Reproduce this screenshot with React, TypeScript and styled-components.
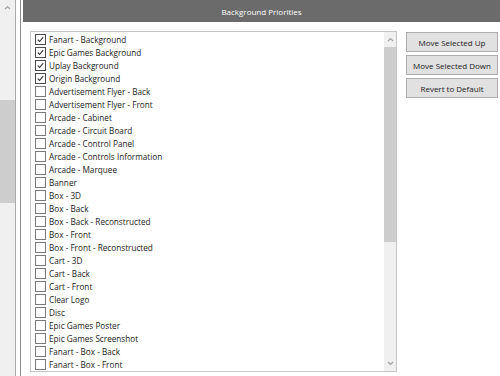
import React from 'react';
import styled, { createGlobalStyle, css } from 'styled-components';

const GlobalStyle = createGlobalStyle`
  html, body {
    margin: 0;
    padding: 0;
    background: #ffffff;
    overflow: hidden;
  }
  body {
    font-family: "Open Sans", "Noto Sans", sans-serif;
  }
`;

const Page = styled.div`
  display: flex;
  width: 500px;
  height: 376px;
  overflow: hidden;
  background: #ffffff;
`;

const ScrollTrack = styled.div<{ width: number }>`
  display: flex;
  flex-direction: column;
  width: ${({ width }) => width}px;
  flex: 0 0 ${({ width }) => width}px;
  background: #f0f0f0;
`;

const ScrollArrow = styled.div`
  display: flex;
  align-items: center;
  justify-content: center;
  height: 15px;
  flex: 0 0 15px;
  color: #a3a3a3;
`;

const ScrollSpace = styled.div<{ size: number }>`
  flex: 0 0 ${({ size }) => size}px;
`;

const ScrollThumb = styled.div<{ size: number }>`
  flex: 0 0 ${({ size }) => size}px;
  background: #cdcdcd;
`;

const ScrollRest = styled.div`
  flex: 1;
`;

const Gutter = styled.div`
  width: 4px;
  flex: 0 0 4px;
  border-left: 1px solid #a9a9a9;
  border-right: 1px solid #8c8c8c;
`;

const Panel = styled.div`
  display: flex;
  flex-direction: column;
  flex: 1;
  padding-left: 2px;
`;

const Header = styled.div`
  display: flex;
  align-items: center;
  justify-content: center;
  height: 22px;
  flex: 0 0 22px;
  background: #6b6b6b;
  color: #ffffff;
  font-size: 8px;
`;

const Body = styled.div`
  display: flex;
  align-items: flex-start;
  padding: 9px 0 0 7px;
`;

const ListBox = styled.div`
  display: flex;
  width: 367px;
  height: 341px;
  box-sizing: border-box;
  border: 1px solid #c6c6c6;
  overflow: hidden;
`;

const Items = styled.div`
  display: flex;
  flex-direction: column;
  flex: 1;
  padding: 1px 0 0 4px;
`;

const Row = styled.div`
  display: flex;
  align-items: center;
  height: 13px;
  flex: 0 0 13px;
  gap: 3px;
  font-size: 8.2px;
  color: #222222;
  white-space: nowrap;
`;

const Box = styled.div<{ checked: boolean }>`
  display: flex;
  align-items: center;
  justify-content: center;
  width: 11px;
  height: 11px;
  box-sizing: border-box;
  border: 1px solid #7a7a7a;
  background: #ffffff;
  ${({ checked }) => checked && css`
    border-color: #4a4a4a;
  `}
`;

const ButtonColumn = styled.div`
  display: flex;
  flex-direction: column;
  gap: 3px;
  margin: 1px 0 0 9px;
  width: 92px;
`;

const Button = styled.div`
  display: flex;
  align-items: center;
  justify-content: center;
  height: 20px;
  box-sizing: border-box;
  border: 1px solid #adadad;
  background: #e1e1e1;
  color: #1a1a1a;
  font-size: 8px;
  white-space: nowrap;
`;

const Chevron: React.FC<{ down?: boolean }> = ({ down }) => (
  <svg width="7" height="5" viewBox="0 0 7 5">
    <path d={down ? 'M1 1 L3.5 3.5 L6 1' : 'M1 4 L3.5 1.5 L6 4'} fill="none" stroke="currentColor" strokeWidth="1.2" />
  </svg>
);

const Check = () => (
  <svg width="9" height="9" viewBox="0 0 9 9">
    <path d="M1.8 4.6 L3.6 6.5 L7.2 2.2" fill="none" stroke="#333" strokeWidth="1.1" />
  </svg>
);

const items: [string, boolean][] = [
  ['Fanart - Background', true],
  ['Epic Games Background', true],
  ['Uplay Background', true],
  ['Origin Background', true],
  ['Advertisement Flyer - Back', false],
  ['Advertisement Flyer - Front', false],
  ['Arcade - Cabinet', false],
  ['Arcade - Circuit Board', false],
  ['Arcade - Control Panel', false],
  ['Arcade - Controls Information', false],
  ['Arcade - Marquee', false],
  ['Banner', false],
  ['Box - 3D', false],
  ['Box - Back', false],
  ['Box - Back - Reconstructed', false],
  ['Box - Front', false],
  ['Box - Front - Reconstructed', false],
  ['Cart - 3D', false],
  ['Cart - Back', false],
  ['Cart - Front', false],
  ['Clear Logo', false],
  ['Disc', false],
  ['Epic Games Poster', false],
  ['Epic Games Screenshot', false],
  ['Fanart - Box - Back', false],
  ['Fanart - Box - Front', false],
];

const App: React.FC = () => {
  return (
    <Page>
      <GlobalStyle />
      <ScrollTrack width={15}>
        <ScrollArrow><Chevron /></ScrollArrow>
        <ScrollSpace size={85} />
        <ScrollThumb size={103} />
        <ScrollRest />
      </ScrollTrack>
      <Gutter />
      <Panel>
        <Header>Background Priorities</Header>
        <Body>
          <ListBox>
            <Items>
              {items.map(([label, checked]) => (
                <Row key={label}>
                  <Box checked={checked}>{checked && <Check />}</Box>
                  <span>{label}</span>
                </Row>
              ))}
            </Items>
            <ScrollTrack width={12}>
              <ScrollArrow><Chevron /></ScrollArrow>
              <ScrollThumb size={195} />
              <ScrollRest />
              <ScrollArrow><Chevron down /></ScrollArrow>
            </ScrollTrack>
          </ListBox>
          <ButtonColumn>
            <Button>Move Selected Up</Button>
            <Button>Move Selected Down</Button>
            <Button>Revert to Default</Button>
          </ButtonColumn>
        </Body>
      </Panel>
    </Page>
  );
};

export default App;
